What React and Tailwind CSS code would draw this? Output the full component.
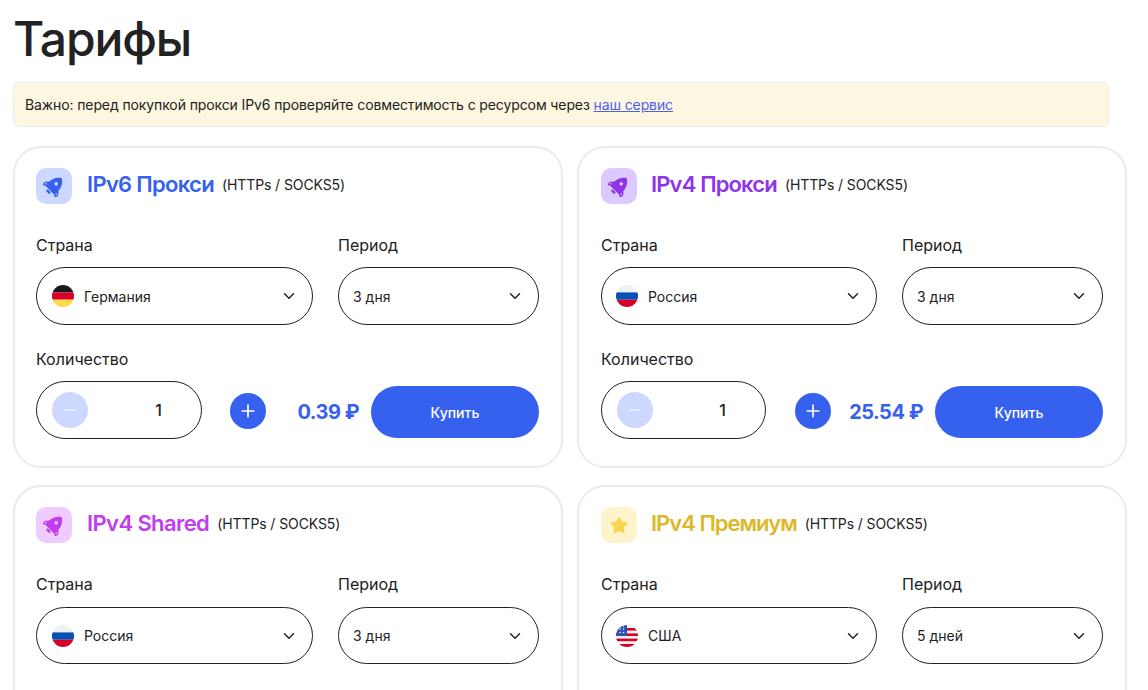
import { ChevronDown, Plus, Minus } from 'lucide-react';
import { FaStar } from 'react-icons/fa';

function Rocket({ hole }) {
  return (
    <svg width="22" height="22" viewBox="0 0 24 24" fill="currentColor">
      <g transform="rotate(45 12 12)">
        <path d="M12 0 C17 3 19 8 19 12.5 L19 16.5 C19 17.8 18 18.5 17 18.5 L7 18.5 C6 18.5 5 17.8 5 16.5 L5 12.5 C5 8 7 3 12 0Z" />
        <circle cx="12" cy="8.6" r="1.9" className={hole} />
        <path d="M6 11 L2.2 15.2 C1.2 16.4 1.6 19.5 3.2 19.8 L6.5 18 Z" />
        <path d="M18 11 L21.8 15.2 C22.8 16.4 22.4 19.5 20.8 19.8 L17.5 18 Z" />
        <circle cx="3.9" cy="16.6" r="0.9" className={hole} />
        <circle cx="20.1" cy="16.6" r="0.9" className={hole} />
        <rect x="9.2" y="19.4" width="5.6" height="2.6" rx="1.3" />
      </g>
    </svg>
  );
}

function Flag({ code }) {
  if (code === 'de') {
    return (
      <svg width="22" height="22" viewBox="0 0 22 22" className="shrink-0">
        <clipPath id="de"><circle cx="11" cy="11" r="11" /></clipPath>
        <g clipPath="url(#de)">
          <rect width="22" height="7.4" fill="#1a1a1a" />
          <rect y="7.4" width="22" height="7.3" fill="#d80027" />
          <rect y="14.7" width="22" height="7.3" fill="#ffda44" />
        </g>
      </svg>
    );
  }
  if (code === 'ru') {
    return (
      <svg width="22" height="22" viewBox="0 0 22 22" className="shrink-0">
        <clipPath id="ru"><circle cx="11" cy="11" r="11" /></clipPath>
        <g clipPath="url(#ru)">
          <rect width="22" height="7.4" fill="#f0f0f0" />
          <rect y="7.4" width="22" height="7.3" fill="#0052b4" />
          <rect y="14.7" width="22" height="7.3" fill="#d80027" />
        </g>
      </svg>
    );
  }
  return (
    <svg width="22" height="22" viewBox="0 0 22 22" className="shrink-0">
      <clipPath id="us"><circle cx="11" cy="11" r="11" /></clipPath>
      <g clipPath="url(#us)">
        <rect width="22" height="22" fill="#f0f0f0" />
        <rect y="3" width="22" height="2.6" fill="#d80027" />
        <rect y="8.4" width="22" height="2.6" fill="#d80027" />
        <rect y="13.6" width="22" height="2.6" fill="#d80027" />
        <rect y="19" width="22" height="3" fill="#d80027" />
        <rect width="11" height="11" fill="#2e52b2" />
        <circle cx="4" cy="4" r="0.8" fill="#f0f0f0" />
        <circle cx="7.5" cy="4" r="0.8" fill="#f0f0f0" />
        <circle cx="4" cy="7.5" r="0.8" fill="#f0f0f0" />
        <circle cx="7.5" cy="7.5" r="0.8" fill="#f0f0f0" />
        <circle cx="7.5" cy="1" r="0.8" fill="#f0f0f0" />
      </g>
    </svg>
  );
}

function Select({ width, height, pad, flag, value }) {
  return (
    <div className={`${width} ${height} ${pad} shrink-0 rounded-[29px] border border-[#222222] flex items-center justify-between pr-[14px]`}>
      <div className="flex items-center gap-[10px]">
        {flag && <Flag code={flag} />}
        <span className="text-[14px] text-[#222222]">{value}</span>
      </div>
      <ChevronDown size={18} strokeWidth={2} className="text-[#222222]" />
    </div>
  );
}

function Card({ title, color, iconBg, hole, star, country, flag, period, price, selectWidth, titleTrack, labelGap, selectHeight, padLeft, titleGap, flagPad, qtyWidth, plusGap }) {
  return (
    <div className={`h-[322px] rounded-[28px] border-2 border-[#ebebeb] bg-white ${padLeft} pr-[22px] pt-[20px]`}>
      <div className="flex items-center h-[36px]">
        <div className={`w-[36px] h-[36px] rounded-[10px] flex items-center justify-center ${iconBg} ${color}`}>
          {star ? <FaStar size={18} className="text-[#f8d452]" /> : <Rocket hole={hole} />}
        </div>
        <span className={`${titleGap} text-[22px] font-semibold -translate-y-[2px] ${titleTrack} ${color}`}>{title}</span>
        <span className="ml-[8px] text-[14px] tracking-[-0.1px] text-[#222222] -translate-y-[2px]">(HTTPs / SOCKS5)</span>
      </div>
      <div className="flex gap-[25px] mt-[29px]">
        <div>
          <div className={`text-[16px] leading-[24px] text-[#222222] ${labelGap}`}>Страна</div>
          <Select width={selectWidth} height={selectHeight} pad={flagPad} flag={flag} value={country} />
        </div>
        <div>
          <div className={`text-[16px] leading-[24px] text-[#222222] ${labelGap}`}>Период</div>
          <Select width="w-[201px]" height={selectHeight} pad="pl-[14px]" value={period} />
        </div>
      </div>
      {price && (
        <div className="mt-[22px]">
          <div className="text-[16px] leading-[24px] text-[#222222] mb-[10px]">Количество</div>
          <div className="flex items-center">
            <div className={`${qtyWidth} h-[58px] rounded-[29px] border border-[#222222] flex items-center pl-[15px]`}>
              <div className="w-[36px] h-[36px] rounded-full bg-[#ccd8ff] flex items-center justify-center">
                <Minus size={18} strokeWidth={2} className="text-[#eef2ff]" />
              </div>
              <span className="flex-1 text-right pr-[39px] text-[16px] font-medium text-[#222222]">1</span>
            </div>
            <div className={`${plusGap} mt-[2px] w-[36px] h-[36px] rounded-full bg-[#3661ee] flex items-center justify-center`}>
              <Plus size={20} strokeWidth={2} className="text-white" />
            </div>
            <span className="ml-auto mr-[12px] mt-[4px] text-[20px] font-bold tracking-[-0.5px] text-[#3661ee]">{price} ₽</span>
            <div className="mt-[4px] w-[168px] h-[52px] rounded-[26px] bg-[#3661ee] flex items-center justify-center text-[14px] font-medium text-white">
              Купить
            </div>
          </div>
        </div>
      )}
    </div>
  );
}

export default function App() {
  return (
    <div className="h-screen overflow-hidden bg-white font-['Inter','Noto_Sans',sans-serif] pl-[13px] pt-[6px]">
      <h1 className="text-[48px] leading-[66px] font-medium tracking-[-1.1px] text-[#222222]">Тарифы</h1>
      <div className="mt-[10px] w-[1096px] h-[45px] rounded-[5px] border border-[#eeeeee] bg-[#fdf6e0] flex items-center pl-[11px] text-[14px] tracking-[-0.11px] text-[#222222]">
        <span>Важно: перед покупкой прокси IPv6 проверяйте совместимость с ресурсом через <a href="#" className="text-[#4f5ef0] underline">наш сервис</a></span>
      </div>
      <div className="mt-[19px] w-[1114px] grid grid-cols-2 gap-x-[14px] gap-y-[17px]">
        <Card title="IPv6 Прокси" color="text-[#3661ee]" iconBg="bg-[#ccd8ff]" hole="fill-[#ccd8ff]" titleTrack="tracking-[-0.7px]" labelGap="mb-[10px]" selectHeight="h-[58px]" padLeft="pl-[21px]" titleGap="ml-[15px]" flagPad="pl-[15px]" qtyWidth="w-[166px]" plusGap="ml-[28px]" country="Германия" flag="de" period="3 дня" price="0.39" selectWidth="w-[277px]" />
        <Card title="IPv4 Прокси" color="text-[#8f35e8]" iconBg="bg-[#dcc9ff]" hole="fill-[#dcc9ff]" titleTrack="tracking-[-0.85px]" labelGap="mb-[10px]" selectHeight="h-[58px]" padLeft="pl-[22px]" titleGap="ml-[14px]" flagPad="pl-[14px]" qtyWidth="w-[165px]" plusGap="ml-[29px]" country="Россия" flag="ru" period="3 дня" price="25.54" selectWidth="w-[276px]" />
        <Card title="IPv4 Shared" color="text-[#c23cf0]" iconBg="bg-[#efcbff]" hole="fill-[#efcbff]" titleTrack="tracking-[-0.6px]" labelGap="mb-[11px]" selectHeight="h-[57px]" padLeft="pl-[21px]" titleGap="ml-[15px]" flagPad="pl-[15px]" country="Россия" flag="ru" period="3 дня" selectWidth="w-[277px]" />
        <Card title="IPv4 Премиум" color="text-[#dcb82a]" iconBg="bg-[#fff3cc]" star titleTrack="tracking-[-1px]" labelGap="mb-[11px]" selectHeight="h-[57px]" padLeft="pl-[22px]" titleGap="ml-[14px]" flagPad="pl-[14px]" country="США" flag="us" period="5 дней" selectWidth="w-[276px]" />
      </div>
    </div>
  );
}
